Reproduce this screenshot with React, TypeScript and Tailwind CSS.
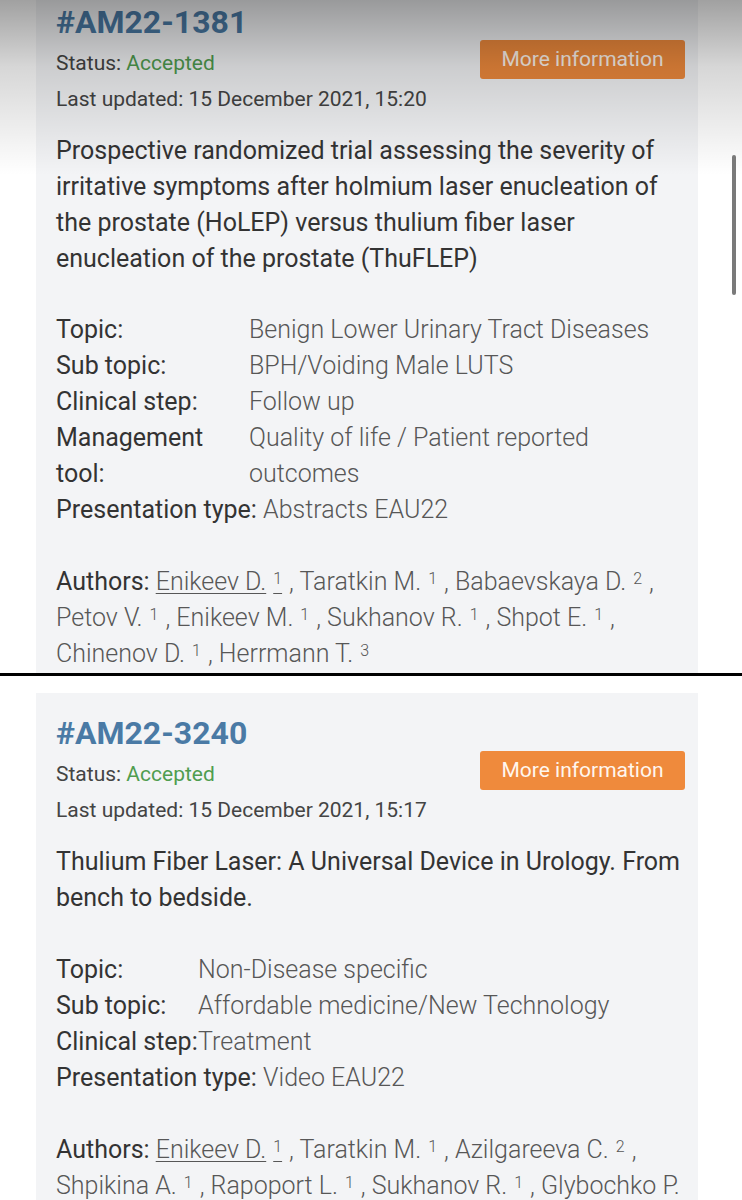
import React from "react";

const FONT = { fontFamily: "Roboto, 'Noto Sans', sans-serif" };

function Sup({ n }: { n: string }) {
  return <sup className="relative -top-[6px] mx-[7px] text-[16px] font-light">{n}</sup>;
}

function Header({ id, updated }: { id: string; updated: string }) {
  return (
    <div className="flex items-start justify-between">
      <div className="flex flex-col">
        <div className="text-[32px] font-bold leading-[40px] text-[#4a7aa5]">{id}</div>
        <div className="mt-[3px] text-[21px] leading-[36px] text-[#444]">
          Status: <span className="text-[#4f9d4f]">Accepted</span>
        </div>
        <div className="text-[21px] leading-[36px] text-[#444]">Last updated: {updated}</div>
      </div>
      <button className="mt-[38px] mr-[-7px] h-[39px] w-[205px] rounded-[3px] bg-[#ef8a3c] text-[21px] text-[#fff6ee]">
        More information
      </button>
    </div>
  );
}

function Row({ label, children }: { label: React.ReactNode; children: React.ReactNode }) {
  return (
    <>
      <div className="whitespace-nowrap text-[#333]">{label}</div>
      <div className="font-light text-[#575757]">{children}</div>
    </>
  );
}

function Card({ children, className }: { children: React.ReactNode; className?: string }) {
  return <div className={"ml-[36px] mr-[44px] bg-[#f3f4f6] px-[20px] pt-[20px] pb-[40px] " + (className ?? "")}>{children}</div>;
}

function Card1() {
  return (
    <Card className="-mt-[18px]">
      <Header id="#AM22-1381" updated="15 December 2021, 15:20" />
      <div className="mt-[16px] text-[25px] leading-[36px] text-[#333]">
        <span className="block whitespace-nowrap">Prospective randomized trial assessing the severity of</span>
        <span className="block whitespace-nowrap">irritative symptoms after holmium laser enucleation of</span>
        <span className="block whitespace-nowrap">the prostate (HoLEP) versus thulium fiber laser</span>
        <span className="block whitespace-nowrap">enucleation of the prostate (ThuFLEP)</span>
      </div>
      <div className="mt-[35px] text-[25px] leading-[36px]">
        <div className="grid grid-cols-[193px_1fr]">
          <Row label="Topic:">Benign Lower Urinary Tract Diseases</Row>
          <Row label="Sub topic:">BPH/Voiding Male LUTS</Row>
          <Row label="Clinical step:">Follow up</Row>
          <Row label={<>Management<br />tool:</>}>
            Quality of life / Patient reported
            <br />
            outcomes
          </Row>
        </div>
        <div className="whitespace-nowrap">
          <span className="text-[#333]">Presentation type:</span>{" "}
          <span className="font-light text-[#575757]">Abstracts EAU22</span>
        </div>
      </div>
      <div className="mt-[36px] text-[25px] leading-[36px] font-light text-[#575757]">
        <span className="block whitespace-nowrap">
          <span className="font-normal text-[#333]">Authors:</span>{" "}
          <span className="underline decoration-1 underline-offset-[3px]">Enikeev D.<Sup n="1" /></span>, Taratkin M.<Sup n="1" />, Babaevskaya D.<Sup n="2" />,
        </span>
        <span className="block whitespace-nowrap">
          Petov V.<Sup n="1" />, Enikeev M.<Sup n="1" />, Sukhanov R.<Sup n="1" />, Shpot E.<Sup n="1" />,
        </span>
        <span className="block whitespace-nowrap">
          Chinenov D.<Sup n="1" />, Herrmann T.<Sup n="3" />
        </span>
      </div>
    </Card>
  );
}

function Card2() {
  return (
    <Card>
      <Header id="#AM22-3240" updated="15 December 2021, 15:17" />
      <div className="mt-[16px] text-[25px] leading-[36px] text-[#333]">
        <span className="block whitespace-nowrap">Thulium Fiber Laser: A Universal Device in Urology. From</span>
        <span className="block whitespace-nowrap">bench to bedside.</span>
      </div>
      <div className="mt-[36px] text-[25px] leading-[36px]">
        <div className="grid grid-cols-[142px_1fr]">
          <Row label="Topic:">Non-Disease specific</Row>
          <Row label="Sub topic:">Affordable medicine/New Technology</Row>
          <Row label="Clinical step:">Treatment</Row>
        </div>
        <div className="whitespace-nowrap">
          <span className="text-[#333]">Presentation type:</span>{" "}
          <span className="font-light text-[#575757]">Video EAU22</span>
        </div>
      </div>
      <div className="mt-[36px] text-[25px] leading-[36px] font-light text-[#575757]">
        <span className="block whitespace-nowrap">
          <span className="font-normal text-[#333]">Authors:</span>{" "}
          <span className="underline decoration-1 underline-offset-[3px]">Enikeev D.<Sup n="1" /></span>, Taratkin M.<Sup n="1" />, Azilgareeva C.<Sup n="2" />,
        </span>
        <span className="block whitespace-nowrap">
          Shpikina A.<Sup n="1" />, Rapoport L.<Sup n="1" />, Sukhanov R.<Sup n="1" />, Glybochko P.
        </span>
      </div>
    </Card>
  );
}

export default function App() {
  return (
    <div className="h-[1200px] w-[742px] overflow-hidden bg-white" style={FONT}>
      <div className="relative h-[673px] overflow-hidden">
        <Card1 />
        <div className="pointer-events-none absolute inset-x-0 top-0 h-[175px] bg-linear-to-b from-black/[0.37] via-black/[0.16] via-38% to-transparent" />
        <div className="absolute left-[732px] top-[155px] h-[140px] w-[4px] rounded-full bg-[#7a7a7a]" />
      </div>
      <div className="h-[3px] bg-black" />
      <div className="h-[17px]" />
      <Card2 />
    </div>
  );
}
